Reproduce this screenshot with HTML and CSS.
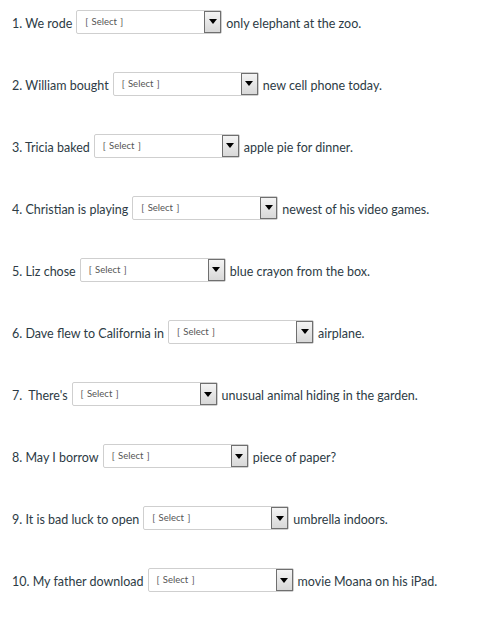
FILE: index.html
```html
<!DOCTYPE html>
<html>
<head>
<meta charset="utf-8">
<link rel="stylesheet" href="styles.css">
</head>
<body>
<div class="quiz">
  <div class="q"><span>1. We rode</span><div class="sel"><span class="ph">[ Select ]</span><span class="btn"><span class="tri"></span></span></div><span>only elephant at the zoo.</span></div>
  <div class="q"><span>2. William bought</span><div class="sel"><span class="ph">[ Select ]</span><span class="btn"><span class="tri"></span></span></div><span>new cell phone today.</span></div>
  <div class="q"><span>3. Tricia baked</span><div class="sel"><span class="ph">[ Select ]</span><span class="btn"><span class="tri"></span></span></div><span>apple pie for dinner.</span></div>
  <div class="q"><span>4. Christian is playing</span><div class="sel"><span class="ph">[ Select ]</span><span class="btn"><span class="tri"></span></span></div><span>newest of his video games.</span></div>
  <div class="q"><span>5. Liz chose</span><div class="sel"><span class="ph">[ Select ]</span><span class="btn"><span class="tri"></span></span></div><span>blue crayon from the box.</span></div>
  <div class="q"><span>6. Dave flew to California in</span><div class="sel"><span class="ph">[ Select ]</span><span class="btn"><span class="tri"></span></span></div><span>airplane.</span></div>
  <div class="q"><span>7.&nbsp; There's</span><div class="sel"><span class="ph">[ Select ]</span><span class="btn"><span class="tri"></span></span></div><span>unusual animal hiding in the garden.</span></div>
  <div class="q"><span>8. May I borrow</span><div class="sel"><span class="ph">[ Select ]</span><span class="btn"><span class="tri"></span></span></div><span>piece of paper?</span></div>
  <div class="q"><span>9. It is bad luck to open</span><div class="sel"><span class="ph">[ Select ]</span><span class="btn"><span class="tri"></span></span></div><span>umbrella indoors.</span></div>
  <div class="q"><span>10. My father download</span><div class="sel"><span class="ph">[ Select ]</span><span class="btn"><span class="tri"></span></span></div><span>movie Moana on his iPad.</span></div>
</div>
</body>
</html>
```
FILE: styles.css
```css
html, body {
  margin: 0;
  padding: 0;
  background: #ffffff;
}
body {
  font-family: Lato, "Open Sans", sans-serif;
  font-size: 12.5px;
  color: #2d3b45;
}
.quiz {
  display: flex;
  flex-direction: column;
  gap: 38.1px;
  padding: 11px 0 0 12px;
}
.q {
  display: flex;
  align-items: center;
  height: 24px;
  white-space: nowrap;
}
.sel {
  display: flex;
  align-items: flex-start;
  justify-content: space-between;
  box-sizing: border-box;
  width: 146px;
  height: 24px;
  margin: 0 4px 3px 4px;
  border: 1px solid #cfcfcf;
  border-radius: 2px;
  background: #fff;
}
.ph {
  font-size: 9.5px;
  color: #555;
  padding: 5px 0 0 8px;
  word-spacing: 1px;
}
.btn {
  display: flex;
  align-items: center;
  justify-content: center;
  box-sizing: border-box;
  width: 17px;
  height: 22px;
  border: 1px solid #6f6f6f;
  background: linear-gradient(#f4f4f4, #d8d8d8);
}
.tri {
  width: 0;
  height: 0;
  border-left: 4px solid transparent;
  border-right: 4px solid transparent;
  border-top: 5px solid #000;
}
```
